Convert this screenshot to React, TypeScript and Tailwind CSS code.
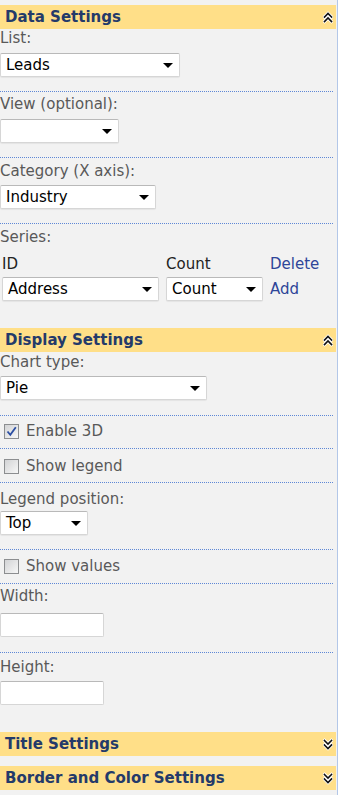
import React from 'react';

const font = { fontFamily: '"DejaVu Sans", Verdana, sans-serif' };

const Chevrons = ({ up }: { up: boolean }) => (
  <svg width="10" height="13" viewBox="0 0 10 13" className="shrink-0">
    {up ? (
      <g fill="none" strokeLinecap="square">
        <path d="M1.5 6 L5 2.5 L8.5 6 M1.5 10.5 L5 7 L8.5 10.5" stroke="#ffffff" strokeWidth="3.2" />
        <path d="M1.5 6 L5 2.5 L8.5 6 M1.5 10.5 L5 7 L8.5 10.5" stroke="#111111" strokeWidth="1.6" />
      </g>
    ) : (
      <g fill="none" strokeLinecap="square">
        <path d="M1.5 2.5 L5 6 L8.5 2.5 M1.5 7 L5 10.5 L8.5 7" stroke="#ffffff" strokeWidth="3.2" />
        <path d="M1.5 2.5 L5 6 L8.5 2.5 M1.5 7 L5 10.5 L8.5 7" stroke="#111111" strokeWidth="1.6" />
      </g>
    )}
  </svg>
);

const Header = ({ title, open, className = '' }: { title: string; open: boolean; className?: string }) => (
  <div className={`h-[24px] mr-[1px] bg-[#ffdf88] flex items-center justify-between pl-[5px] pr-[3px] ${className}`}>
    <span className="text-[15px] leading-[18px] font-bold text-[#243a6a]">{title}</span>
    <Chevrons up={open} />
  </div>
);

const Label = ({ children, className = '' }: { children: React.ReactNode; className?: string }) => (
  <div className={`h-[18px] text-[15px] leading-[18px] text-[#595959] whitespace-nowrap ${className}`}>{children}</div>
);

const Select = ({ value, width, className = '' }: { value: string; width: string; className?: string }) => (
  <div
    className={`h-[24px] ${width} bg-white border border-[#d6d6d6] border-t-[#b9b9b9] rounded-[2px] shadow-[0_1px_1px_rgba(0,0,0,0.06)] flex items-center justify-between pl-[5px] pr-[6px] ${className}`}
  >
    <span className="text-[15px] leading-[18px] text-black">{value}</span>
    <svg width="10" height="5" viewBox="0 0 10 5">
      <path d="M0 0 H10 L5 5 Z" fill="#000000" />
    </svg>
  </div>
);

const TextBox = ({ className = '' }: { className?: string }) => (
  <div className={`h-[24px] w-[104px] bg-white border border-[#d6d6d6] border-t-[#b9b9b9] rounded-[2px] ${className}`} />
);

// dotted blue rule between fields
const Divider = ({ className = '' }: { className?: string }) => (
  <div
    className={`h-[1px] w-[334px] shrink-0 bg-[linear-gradient(90deg,#5f88d6_50%,transparent_50%)] bg-[length:2px_1px] bg-repeat-x ${className}`}
  />
);

const Check = ({ label, checked, className = '' }: { label: string; checked?: boolean; className?: string }) => (
  <div className={`h-[18px] flex items-center gap-[7px] pl-[4px] ${className}`}>
    <div className="w-[15px] h-[15px] border border-[#8c8e90] bg-[linear-gradient(135deg,#d2d3d5,#f7f7f7)] flex items-center justify-center">
      {checked && (
        <svg width="11" height="11" viewBox="0 0 11 11">
          <path d="M1.5 5.5 L4.3 8.8 L9.8 1.2" fill="none" stroke="#2b4ea3" strokeWidth="1.8" />
        </svg>
      )}
    </div>
    <span className="text-[15px] leading-[18px] text-[#595959]">{label}</span>
  </div>
);

export default function App() {
  return (
    <div className="w-[340px] h-[795px] bg-white flex overflow-hidden" style={font}>
      <div className="w-[338px] h-full bg-[#f2f2f2] border-r border-[#b3c7e8] flex flex-col pt-[5px]">
        {/* Data Settings */}
        <Header title="Data Settings" open />
        <Label>List:</Label>
        <Select value="Leads" width="w-[180px]" className="mt-[6px]" />
        <Divider className="mt-[14px]" />

        <Label className="mt-[3px]">View (optional):</Label>
        <Select value="" width="w-[119px]" className="mt-[6px]" />
        <Divider className="mt-[14px]" />

        <Label className="mt-[4px]">Category (X axis):</Label>
        <Select value="Industry" width="w-[156px]" className="mt-[5px]" />
        <Divider className="mt-[14px]" />

        <Label className="mt-[4px]">Series:</Label>
        <div className="mt-[9px] h-[18px] flex text-[15px] leading-[18px] text-[#222]">
          <span className="ml-[2px] w-[164px]">ID</span>
          <span className="w-[104px]">Count</span>
          <span className="text-[#2e4699]">Delete</span>
        </div>
        <div className="mt-[4px] flex items-center">
          <Select value="Address" width="w-[157px]" className="ml-[2px]" />
          <Select value="Count" width="w-[97px]" className="ml-[7px]" />
          <span className="ml-[7px] text-[15px] leading-[18px] text-[#2e4699]">Add</span>
        </div>

        {/* Display Settings */}
        <Header title="Display Settings" open className="mt-[27px]" />
        <Label className="mt-[1px]">Chart type:</Label>
        <Select value="Pie" width="w-[207px]" className="mt-[5px]" />
        <Divider className="mt-[15px]" />

        <Check label="Enable 3D" checked className="mt-[6px]" />
        <Divider className="mt-[8px]" />

        <Check label="Show legend" className="mt-[8px]" />
        <Divider className="mt-[7px]" />

        <Label className="mt-[7px]">Legend position:</Label>
        <Select value="Top" width="w-[88px]" className="mt-[3px]" />
        <Divider className="mt-[14px]" />

        <Check label="Show values" className="mt-[7px]" />
        <Divider className="mt-[8px]" />

        <Label className="mt-[3px]">Width:</Label>
        <TextBox className="mt-[8px]" />
        <Divider className="mt-[15px]" />

        <Label className="mt-[5px]">Height:</Label>
        <TextBox className="mt-[5px]" />

        <Header title="Title Settings" open={false} className="mt-[27px]" />
        <Header title="Border and Color Settings" open={false} className="mt-[10px]" />
      </div>
    </div>
  );
}
